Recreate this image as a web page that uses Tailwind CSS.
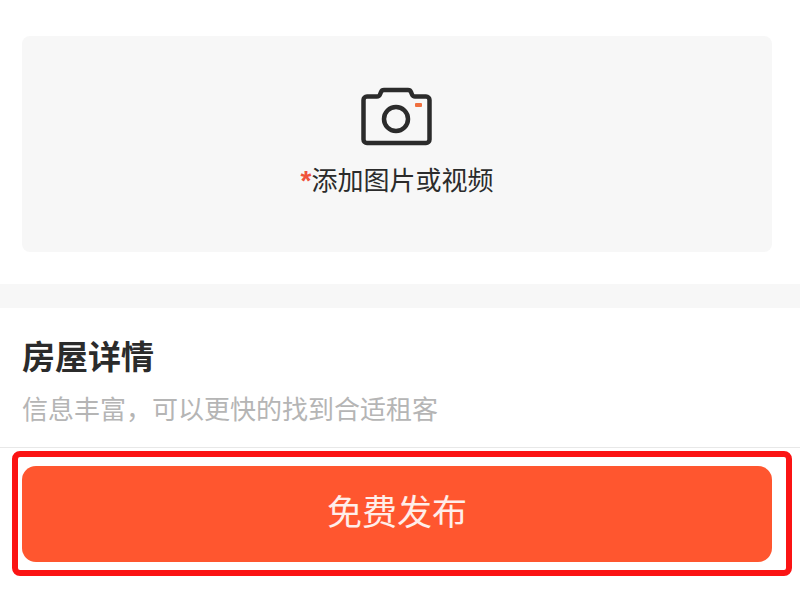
<!DOCTYPE html>
<html lang="zh-CN">

<head>
  <meta charset="UTF-8">
  <meta name="viewport" content="width=device-width, initial-scale=1.0">
  <title>发布房源</title>
  <script src="https://cdn.jsdelivr.net/npm/@tailwindcss/browser@4"></script>
</head>

<body class="bg-white overflow-hidden font-['Noto_Sans_CJK_SC','Noto_Sans',sans-serif]">
  <div class="relative w-[800px] h-[600px] flex flex-col">

    <div class="pt-9 px-[22px] pr-7">
      <div class="h-[216px] bg-[#f7f7f7] rounded-lg flex flex-col items-center">
        <svg class="mt-[51px] -ml-0.5 w-[72px] h-[60px]" viewBox="0 0 72 60" fill="none">
          <path d="M7 9.5h10c1.500 0 2.500-.8 3-2l1-2.500c.5-1.300 1.500-2 3-2h24c1.500 0 2.500.7 3 2l1 2.500c.5 1.200 1.500 2 3 2h11c2 0 3.500 1.500 3.500 3.500v39.500c0 2-1.500 3.500-3.500 3.500H7c-2 0-3.500-1.500-3.500-3.500V13c0-2 1.500-3.500 3.500-3.500z" stroke="#2b2b2b" stroke-width="4.500" stroke-linejoin="round" />
          <circle cx="36" cy="32" r="12" stroke="#2b2b2b" stroke-width="4.500" />
          <rect x="55" y="16" width="7" height="4" rx="1" fill="#f0703f" />
        </svg>
        <p class="mt-[14px] text-[26px] leading-[36px] text-[#2b2b2b]"><span class="text-[#f0533a] font-bold font-['Liberation_Sans',sans-serif] text-[28px] leading-[20px]">*</span>添加图片或视频</p>
      </div>
    </div>

    <div class="mt-8 h-6 bg-[#f7f7f7]"></div>

    <div class="px-[22px] pt-6">
      <h2 class="text-[33px] leading-[46px] font-bold text-[#2b2b2b]">房屋详情</h2>
      <p class="mt-3 text-[26px] leading-[36px] text-[#b5b5b5]">信息丰富，可以更快的找到合适租客</p>
    </div>

    <div class="mt-[21px] border-t border-[#e8e8e8] pt-[18px] px-[22px] pr-7">
      <button class="w-full h-[96px] pb-2 rounded-[14px] bg-[#ff562f] text-white/90 text-[35px]">免费发布</button>
    </div>

    <!-- red annotation over the button -->
    <div class="absolute left-3 top-[451px] w-[780px] h-[125px] border-[6px] border-[#fb1414] rounded-[8px]"></div>
  </div>
</body>

</html>
